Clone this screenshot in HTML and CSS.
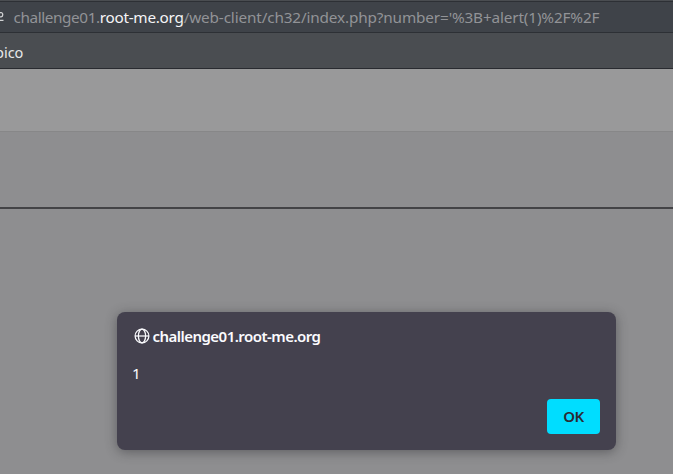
FILE: index.html
```
<!DOCTYPE html>
<html lang="en">
<head>
<meta charset="utf-8">
<title>challenge01.root-me.org</title>
<link rel="stylesheet" href="styles.css">
</head>
<body>
<div class="address-bar">
  <svg class="permissions" width="5" height="12" viewBox="0 0 5 12" fill="none" stroke="#d0d1d3" stroke-width="1.3"><path d="M0 1.7h1.1c2.2 0 2.2 3.8 0 4.2H0M0 9.3h3.5"/></svg>
  <span class="url"><span class="sub">challenge01.</span><span class="host">root-me.org</span><span class="path">/web-client/ch32/index.php?number='%3B+alert(1)%2F%2F</span></span>
</div>
<div class="bookmarks"><span class="bookmark">pico</span></div>
<main class="page">
  <div class="band"></div>
  <div class="section"></div>
</main>
<div class="dialog" role="dialog">
  <div class="title">
    <svg width="16" height="16" viewBox="0 0 16 16" fill="none" stroke="#fbfbfe" stroke-width="1.25"><circle cx="8" cy="8" r="6.9"/><ellipse cx="8" cy="8" rx="3.6" ry="6.9"/><path d="M1 8h14"/></svg>
    <span class="origin">challenge01.root-me.org</span>
  </div>
  <div class="message">1</div>
  <button class="ok">OK</button>
</div>
</body>
</html>
```
FILE: styles.css
```
* { box-sizing: border-box; }
body {
  margin: 0;
  height: 474px;
  overflow: hidden;
  background: #8e8e90;
  font: 15.3px/20px "Noto Sans", sans-serif;
  white-space: nowrap;
}
.address-bar {
  display: flex;
  align-items: center;
  height: 33px;
  padding-top: 1px;
  background: linear-gradient(#4a4d51 1px, #2d3035 1px, #2d3035 2px, #3f4349 2px);
  border-bottom: 1px solid #2d3035;
}
.permissions { flex: none; margin: 0 8.5px 0 0; }
.url { color: #929397; }
.sub { letter-spacing: -.4px; }
.host { color: #f4f4f6; letter-spacing: -.26px; }
.path { letter-spacing: -.14px; }
.bookmarks {
  display: flex;
  align-items: center;
  height: 36px;
  padding-top: 3px;
  background: #4a4d51;
  border-bottom: 1px solid #292b30;
}
.bookmark { margin-left: -5px; color: #e7e8e9; font-size: 14.5px; }
.band { height: 63px; background: #99999a; border-bottom: 1px solid #878788; }
.section { height: 77px; border-bottom: 2px solid #434346; }
.dialog {
  position: absolute;
  left: 117px;
  top: 312px;
  display: flex;
  flex-direction: column;
  width: 499px;
  height: 138px;
  padding: 14px 16px 16px;
  border-radius: 8px;
  background: #44414e;
  color: #fbfbfe;
  box-shadow: 0 2px 12px rgba(35, 35, 40, .45);
}
.title { display: flex; align-items: center; gap: 3px; height: 20px; font-weight: 600; }
.title svg { flex: none; margin-left: .5px; }
.origin { font-size: 15px; letter-spacing: -.53px; }
.message { margin: 17px 0 0 -1px; height: 20px; }
.ok {
  align-self: flex-end;
  margin-top: 16px;
  width: 53px;
  height: 35px;
  padding: 0;
  border: 0;
  border-radius: 4px;
  background: #00ddff;
  color: #2b2a33;
  font: 600 15px/35px "Noto Sans", sans-serif;
  letter-spacing: -.6px;
}
```
